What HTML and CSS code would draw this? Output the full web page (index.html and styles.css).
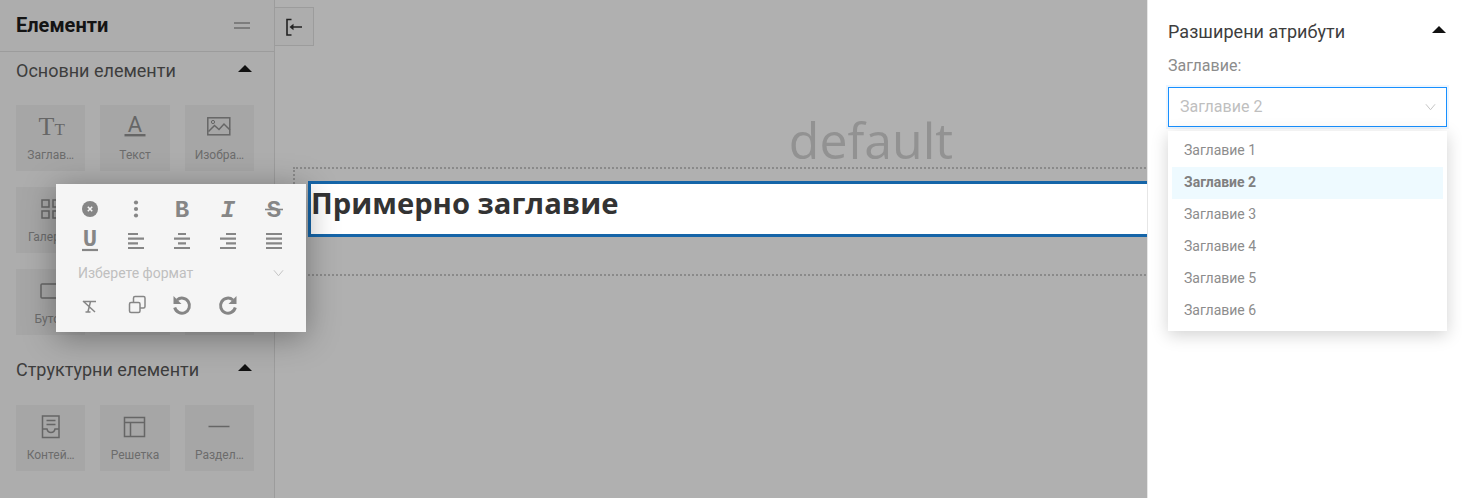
FILE: index.html
```html
<!DOCTYPE html>
<html lang="bg">
<head>
<meta charset="utf-8">
<title>Елементи</title>
<link rel="stylesheet" href="styles.css">
</head>
<body>
<div class="app">
  <aside class="sidebar">
    <header class="side-head">
      <h1 class="side-title">Елементи</h1>
      <span class="grip"></span>
    </header>
    <section class="group group-basic">
      <div class="group-head"><h2>Основни елементи</h2><span class="caret"></span></div>
      <div class="tiles">
        <div class="tile"><svg class="ti" viewBox="0 0 24 24"><text x="-0.500" y="20" class="ti-serif"><tspan class="ti-big">T</tspan><tspan class="ti-small">T</tspan></text></svg><span class="tile-label">Заглав…</span></div>
        <div class="tile"><svg class="ti" viewBox="0 0 24 24"><text x="12" y="17" class="ti-sans">A</text><rect x="1.500" y="19" width="21" height="2.400" class="fill"/></svg><span class="tile-label">Текст</span></div>
        <div class="tile"><svg class="ti" viewBox="0 0 24 24"><rect x="0.800" y="2.800" width="22" height="17" class="line"/><circle cx="6" cy="7" r="1.600" class="line thin"/><path d="M1.500 16.500l6-6 4.500 4 5-5.500 6 6" class="line"/></svg><span class="tile-label">Изобра…</span></div>
        <div class="tile"><svg class="ti" viewBox="0 0 24 24"><path d="M3 3h7v7H3zM14 3h7v7h-7zM3 14h7v7H3zM14 14h7v7h-7z" class="line"/></svg><span class="tile-label">Галерия</span></div>
        <div class="tile"></div>
        <div class="tile"></div>
        <div class="tile"><svg class="ti" viewBox="0 0 24 24"><rect x="2" y="5" width="20" height="14" rx="1" class="line"/></svg><span class="tile-label">Бутон</span></div>
        <div class="tile"></div>
        <div class="tile"></div>
      </div>
    </section>
    <section class="group group-struct">
      <div class="group-head"><h2>Структурни елементи</h2><span class="caret"></span></div>
      <div class="tiles">
        <div class="tile"><svg class="ti" viewBox="0 0 24 24"><path d="M3.500 1h16.500v21.500H3.500zM7.500 5.500h9M7.500 9.500h9M3.500 14h4.500c.5 2.500 2 3.500 4 3.500s3.500-1 4-3.500h4" class="line"/></svg><span class="tile-label">Контей…</span></div>
        <div class="tile"><svg class="ti" viewBox="0 0 24 24"><path d="M1.500 2.500h20v19h-20zM1.500 7.500h20M7.500 7.500v14" class="line"/></svg><span class="tile-label">Решетка</span></div>
        <div class="tile"><svg class="ti" viewBox="0 0 24 24"><path d="M1.500 11.500h21" class="line"/></svg><span class="tile-label">Раздел…</span></div>
      </div>
    </section>
  </aside>

  <main class="canvas">
    <button class="collapse" type="button" aria-label="Свий">
      <svg viewBox="0 0 24 24" width="24" height="24"><path d="M9.500 4.500h-4.500v15.500h4.500M20 12H9" class="dark"/><path d="M7.500 12l4-3.200v6.400z" class="dark-fill"/></svg>
    </button>
    <div class="stage">
      <div class="stage-name">default</div>
      <div class="dropzone">
        <div class="heading-box"><h3>Примерно заглавие</h3></div>
      </div>
    </div>
  </main>

  <aside class="props">
    <div class="props-head"><h2>Разширени атрибути</h2><span class="caret"></span></div>
    <label class="prop-label">Заглавие:</label>
    <div class="select"><span>Заглавие 2</span><svg class="chev" viewBox="0 0 12 8"><path d="M1 1l5 6 5-6"/></svg></div>
    <ul class="options">
      <li>Заглавие 1</li>
      <li class="active">Заглавие 2</li>
      <li>Заглавие 3</li>
      <li>Заглавие 4</li>
      <li>Заглавие 5</li>
      <li>Заглавие 6</li>
    </ul>
  </aside>

  <div class="toolbar">
    <span class="tool"><svg viewBox="0 0 24 24"><circle cx="12" cy="12" r="8" class="f"/><path d="M9.800 9.800l4.400 4.400M14.200 9.800l-4.400 4.400" class="x"/></svg></span>
    <span class="tool"><svg viewBox="0 0 24 24"><circle cx="12" cy="5.500" r="2.100" class="f"/><circle cx="12" cy="12" r="2.100" class="f"/><circle cx="12" cy="18.500" r="2.100" class="f"/></svg></span>
    <span class="tool"><svg viewBox="0 0 24 24"><text x="12" y="20" class="g g-b">B</text></svg></span>
    <span class="tool"><svg viewBox="0 0 24 24"><text x="12" y="20" class="g g-i">I</text></svg></span>
    <span class="tool"><svg viewBox="0 0 24 24"><text x="12" y="19.500" class="g g-s">S</text><path d="M3 12.500h18" class="s"/></svg></span>

    <span class="tool"><svg viewBox="0 0 24 24"><text x="12" y="17" class="g g-u">U</text><path d="M4 21h16" class="s s2"/></svg></span>
    <span class="tool"><svg viewBox="0 0 24 24"><path d="M4 5h10M4 9.700h16M4 14.300h10M4 19h16" class="s s2"/></svg></span>
    <span class="tool"><svg viewBox="0 0 24 24"><path d="M8 5h8M4 9.700h16M8 14.300h8M4 19h16" class="s s2"/></svg></span>
    <span class="tool"><svg viewBox="0 0 24 24"><path d="M10 5h10M4 9.700h16M10 14.300h10M4 19h16" class="s s2"/></svg></span>
    <span class="tool"><svg viewBox="0 0 24 24"><path d="M4 5h16M4 9.700h16M4 14.300h16M4 19h16" class="s s2"/></svg></span>

    <div class="format"><span>Изберете формат</span><svg class="chev" viewBox="0 0 12 8"><path d="M1 1l5 6 5-6"/></svg></div>

    <span class="tool"><svg viewBox="0 0 24 24"><path d="M5 8.500h13M12.500 8.500l-2.500 10M7.500 19h5M5 8l12 11" class="s thin"/></svg></span>
    <span class="tool tool-shift"><svg viewBox="0 0 24 24"><rect x="4.500" y="9.500" width="10.500" height="10" rx="1.500" class="s thin"/><path d="M8.500 9.500V5a1.500 1.500 0 0 1 1.500-1.500h8.500A1.500 1.500 0 0 1 20 5v8.500a1.500 1.500 0 0 1-1.500 1.500H15" class="s thin"/></svg></span>
    <span class="tool"><svg viewBox="0 0 24 24"><path d="M7 7a7.500 7.500 0 1 1-2.300 7.500" class="s s3"/><path d="M3.500 3v8h8z" class="f"/></svg></span>
    <span class="tool"><svg viewBox="0 0 24 24"><path d="M17 7a7.500 7.500 0 1 0 2.300 7.500" class="s s3"/><path d="M20.500 3v8h-8z" class="f"/></svg></span>
  </div>
</div>
</body>
</html>
```
FILE: styles.css
```css
* { box-sizing: border-box; }
html, body { margin: 0; padding: 0; height: 100%; overflow: hidden; }
body { font-family: Roboto, "Liberation Sans", sans-serif; background: #b0b0b0; }
h1, h2, h3, ul { margin: 0; padding: 0; }
svg { overflow: visible; }

.app { position: relative; display: flex; width: 1462px; height: 498px; overflow: hidden; }

/* left panel */
.sidebar { flex: 0 0 275px; background: #adadad; border-right: 1px solid #9c9c9c; }
.side-head { height: 52px; border-bottom: 1px solid #9c9c9c; padding: 0 24px 1px 16px; display: flex; align-items: center; justify-content: space-between; }
.side-title { font-size: 20px; font-weight: 700; color: #141414; line-height: 24px; }
.grip { width: 16px; height: 7px; border-top: 2px solid #7d7d7d; border-bottom: 2px solid #7d7d7d; }
.group { padding: 0 16px; }
.group-head { display: flex; justify-content: space-between; align-items: center; padding-right: 6px; height: 24px; }
.group-head h2, .props-head h2 { font-size: 18px; font-weight: 400; color: #3d3d3d; line-height: 24px; }
.group-basic .group-head { margin-top: 7px; }
.group-struct { margin-top: 23px; }
.caret { width: 0; height: 0; border-left: 7px solid transparent; border-right: 7px solid transparent; border-bottom: 7px solid #111; margin-top: -5px; }
.tiles { display: grid; grid-template-columns: repeat(3, 1fr); column-gap: 15px; row-gap: 16px; margin-top: 22px; width: 238px; }
.group-struct .tiles { margin-top: 23px; }
.tile { height: 66px; background: #a6a6a6; display: flex; flex-direction: column; align-items: center; padding: 10px 4px 0; min-width: 0; }
.ti { width: 24px; height: 24px; flex: none; }
.ti-serif { font-family: "Liberation Serif", serif; fill: #666; }
.ti-big { font-size: 26px; }
.ti-small { font-size: 17px; }
.ti-sans { font-family: Roboto, sans-serif; font-size: 22px; fill: #666; text-anchor: middle; }
.fill { fill: #666; }
.line { fill: none; stroke: #666; stroke-width: 1.5; }
.line.thin { stroke-width: 1; }
.tile-label { display: block; width: 100%; margin-top: 7px; font-size: 12px; line-height: 18px; color: #6c6c6c; white-space: nowrap; text-align: center; }

/* centre */
.canvas { flex: 0 0 872px; position: relative; overflow: hidden; padding: 114px 0 0 18px; background: #b0b0b0; }
.collapse { position: absolute; left: 0; top: 7px; width: 39px; height: 39px; background: #adadad; border: 1px solid #9c9c9c; border-left: 0; padding: 0; display: flex; align-items: center; justify-content: center; }
.dark { fill: none; stroke: #222; stroke-width: 1.6; }
.dark-fill { fill: #222; }
.stage { width: 1156px; }
.stage-name { font-family: "Open Sans", sans-serif; font-size: 50px; line-height: 53px; color: #929292; text-align: center; }
.dropzone { height: 109px; border-top: 2px dotted #8a8a8a; border-bottom: 2px dotted #8a8a8a; border-left: 2px dotted #8a8a8a; padding: 12px 0 0 13px; }
.heading-box { height: 56px; background: #fff; border: 3px solid #1565a8; padding: 0 0 0 1px; }
.heading-box h3 { font-family: "Open Sans", sans-serif; font-size: 29.200px; font-weight: 700; color: #333; line-height: 38px; margin-left: -1px; }

/* right panel */
.props { flex: 1; background: #fff; border-left: 1px solid #e6e6e6; padding: 20px 15px 0 20px; position: relative; }
.props-head { display: flex; justify-content: space-between; align-items: center; height: 24px; }
.props-head h2 { letter-spacing: .05px; }
.props-head .caret { margin-right: 1px; }
.prop-label { display: block; margin-top: 11px; font-size: 16px; line-height: 22px; color: #8c8c8c; }
.select { margin-top: 10px; height: 40px; border: 1px solid #1890ff; box-shadow: 0 0 0 2px rgba(24,144,255,.08); display: flex; align-items: center; justify-content: space-between; padding: 0 10px 2px 11px; font-size: 16px; color: #bfbfbf; }
.select .chev { margin-top: 2px; }
.chev { width: 11px; height: 8px; fill: none; stroke: #bfbfbf; stroke-width: 1; flex: none; }
.options { position: absolute; left: 20px; top: 131px; width: 279px; background: #fff; list-style: none; padding: 4px; box-shadow: 0 4px 16px rgba(0,0,0,.18); }
.options li { height: 32px; line-height: 30px; padding: 0 12px; font-size: 14px; color: #8c8c8c; }
.options li.active { background: #eefaff; font-weight: 700; color: #7f7f7f; }

/* floating toolbar */
.toolbar { position: absolute; left: 56px; top: 184px; width: 250px; height: 148px; background: #f5f5f5; box-shadow: 0 5px 30px rgba(0,0,0,.35); padding: 9px 8px 0 11px; display: grid; grid-template-columns: repeat(5, 46px); grid-auto-rows: 32px; }
.tool { display: flex; align-items: center; justify-content: center; }
.tool svg { width: 24px; height: 24px; flex: none; }
.tool-shift { padding-left: 1px; }
.f { fill: #868686; }
.x { stroke: #f5f5f5; stroke-width: 1.6; fill: none; }
.s { stroke: #868686; stroke-width: 1.6; fill: none; }
.s.s2 { stroke-width: 2.2; }
.s.s3 { stroke-width: 3; }
.s.thin { stroke-width: 1.5; }
.g { fill: #868686; text-anchor: middle; font-size: 24px; font-family: "Liberation Mono", monospace; font-weight: 700; }
.g-i { font-style: italic; }
.format { grid-column: 1 / -1; display: flex; align-items: center; justify-content: space-between; padding: 0 14px 0 11px; font-size: 14px; color: #bfbfbf; margin-right: -1px; }
```
